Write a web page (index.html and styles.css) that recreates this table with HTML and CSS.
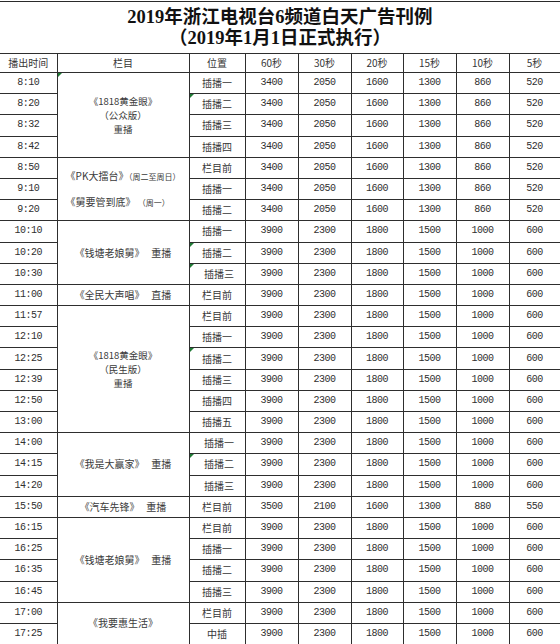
FILE: index.html
```html
<!DOCTYPE html>
<html lang="zh-CN">
<head>
<meta charset="utf-8">
<title>2019年浙江电视台6频道白天广告刊例</title>
<link rel="stylesheet" href="styles.css">
</head>
<body>
<div class="sheet">
  <div class="title">
    <div>2019年浙江电视台6频道白天广告刊例</div>
    <div>（2019年1月1日正式执行）</div>
  </div>
  <table class="grid">
    <colgroup>
      <col class="c-time"><col class="c-prog"><col class="c-pos">
      <col class="c-60"><col class="c-30"><col class="c-20"><col class="c-15"><col class="c-10"><col class="c-5">
    </colgroup>
    <thead>
      <tr class="head">
        <th class="first">播出时间</th><th>栏目</th><th>位置</th>
        <th>60秒</th><th>30秒</th><th>20秒</th><th>15秒</th><th>10秒</th><th>5秒</th>
      </tr>
    </thead>
    <tbody>
      <tr>
        <td class="first n">8:10</td>
        <td class="prog tri" rowspan="4"><p class="lines">《1818黄金眼》<br>（公众版）<br>重播</p></td>
        <td>插播一</td><td class="n">3400</td><td class="n">2050</td><td class="n">1600</td><td class="n">1300</td><td class="n">860</td><td class="n">520</td>
      </tr>
      <tr>
        <td class="first n">8:20</td>
        <td class="tri">插播二</td><td class="n">3400</td><td class="n">2050</td><td class="n">1600</td><td class="n">1300</td><td class="n">860</td><td class="n">520</td>
      </tr>
      <tr>
        <td class="first n">8:32</td>
        <td>插播三</td><td class="n">3400</td><td class="n">2050</td><td class="n">1600</td><td class="n">1300</td><td class="n">860</td><td class="n">520</td>
      </tr>
      <tr>
        <td class="first n">8:42</td>
        <td>插播四</td><td class="n">3400</td><td class="n">2050</td><td class="n">1600</td><td class="n">1300</td><td class="n">860</td><td class="n">520</td>
      </tr>
      <tr>
        <td class="first n">8:50</td>
        <td class="prog" rowspan="3"><div class="pk"><div>《PK大擂台》<span class="small">（周二至周日）</span></div><div class="pk2">《舅要管到底》 <span class="small">（周一）</span></div></div></td>
        <td>栏目前</td><td class="n">3400</td><td class="n">2050</td><td class="n">1600</td><td class="n">1300</td><td class="n">860</td><td class="n">520</td>
      </tr>
      <tr>
        <td class="first n">9:10</td>
        <td>插播一</td><td class="n">3400</td><td class="n">2050</td><td class="n">1600</td><td class="n">1300</td><td class="n">860</td><td class="n">520</td>
      </tr>
      <tr>
        <td class="first n">9:20</td>
        <td>插播二</td><td class="n">3400</td><td class="n">2050</td><td class="n">1600</td><td class="n">1300</td><td class="n">860</td><td class="n">520</td>
      </tr>
      <tr>
        <td class="first n">10:10</td>
        <td class="prog" rowspan="3">《钱塘老娘舅》&nbsp;&nbsp;&nbsp;重播</td>
        <td>插播一</td><td class="n">3900</td><td class="n">2300</td><td class="n">1800</td><td class="n">1500</td><td class="n">1000</td><td class="n">600</td>
      </tr>
      <tr>
        <td class="first n">10:20</td>
        <td class="tri">插播二</td><td class="n">3900</td><td class="n">2300</td><td class="n">1800</td><td class="n">1500</td><td class="n">1000</td><td class="n">600</td>
      </tr>
      <tr>
        <td class="first n">10:30</td>
        <td class="tri shift">插播三</td><td class="n">3900</td><td class="n">2300</td><td class="n">1800</td><td class="n">1500</td><td class="n">1000</td><td class="n">600</td>
      </tr>
      <tr>
        <td class="first n">11:00</td>
        <td class="prog">《全民大声唱》&nbsp;&nbsp;&nbsp;直播</td>
        <td>栏目前</td><td class="n">3900</td><td class="n">2300</td><td class="n">1800</td><td class="n">1500</td><td class="n">1000</td><td class="n">600</td>
      </tr>
      <tr>
        <td class="first n">11:57</td>
        <td class="prog" rowspan="6"><p class="lines">《1818黄金眼》<br>（民生版）<br>重播</p></td>
        <td>栏目前</td><td class="n">3900</td><td class="n">2300</td><td class="n">1800</td><td class="n">1500</td><td class="n">1000</td><td class="n">600</td>
      </tr>
      <tr>
        <td class="first n">12:10</td>
        <td>插播一</td><td class="n">3900</td><td class="n">2300</td><td class="n">1800</td><td class="n">1500</td><td class="n">1000</td><td class="n">600</td>
      </tr>
      <tr>
        <td class="first n">12:25</td>
        <td class="tri">插播二</td><td class="n">3900</td><td class="n">2300</td><td class="n">1800</td><td class="n">1500</td><td class="n">1000</td><td class="n">600</td>
      </tr>
      <tr>
        <td class="first n">12:39</td>
        <td>插播三</td><td class="n">3900</td><td class="n">2300</td><td class="n">1800</td><td class="n">1500</td><td class="n">1000</td><td class="n">600</td>
      </tr>
      <tr>
        <td class="first n">12:50</td>
        <td>插播四</td><td class="n">3900</td><td class="n">2300</td><td class="n">1800</td><td class="n">1500</td><td class="n">1000</td><td class="n">600</td>
      </tr>
      <tr>
        <td class="first n">13:00</td>
        <td>插播五</td><td class="n">3900</td><td class="n">2300</td><td class="n">1800</td><td class="n">1500</td><td class="n">1000</td><td class="n">600</td>
      </tr>
      <tr>
        <td class="first n">14:00</td>
        <td class="prog" rowspan="3">《我是大赢家》&nbsp;&nbsp;&nbsp;重播</td>
        <td class="shift">插播一</td><td class="n">3900</td><td class="n">2300</td><td class="n">1800</td><td class="n">1500</td><td class="n">1000</td><td class="n">600</td>
      </tr>
      <tr>
        <td class="first n">14:15</td>
        <td class="tri shift">插播二</td><td class="n">3900</td><td class="n">2300</td><td class="n">1800</td><td class="n">1500</td><td class="n">1000</td><td class="n">600</td>
      </tr>
      <tr>
        <td class="first n">14:20</td>
        <td class="shift">插播三</td><td class="n">3900</td><td class="n">2300</td><td class="n">1800</td><td class="n">1500</td><td class="n">1000</td><td class="n">600</td>
      </tr>
      <tr>
        <td class="first n">15:50</td>
        <td class="prog">《汽车先锋》&nbsp;&nbsp;&nbsp;重播</td>
        <td>栏目前</td><td class="n">3500</td><td class="n">2100</td><td class="n">1600</td><td class="n">1300</td><td class="n">880</td><td class="n">550</td>
      </tr>
      <tr>
        <td class="first n">16:15</td>
        <td class="prog" rowspan="4">《钱塘老娘舅》&nbsp;&nbsp;&nbsp;重播</td>
        <td>栏目前</td><td class="n">3900</td><td class="n">2300</td><td class="n">1800</td><td class="n">1500</td><td class="n">1000</td><td class="n">600</td>
      </tr>
      <tr>
        <td class="first n">16:25</td>
        <td>插播一</td><td class="n">3900</td><td class="n">2300</td><td class="n">1800</td><td class="n">1500</td><td class="n">1000</td><td class="n">600</td>
      </tr>
      <tr>
        <td class="first n">16:35</td>
        <td>插播二</td><td class="n">3900</td><td class="n">2300</td><td class="n">1800</td><td class="n">1500</td><td class="n">1000</td><td class="n">600</td>
      </tr>
      <tr>
        <td class="first n">16:45</td>
        <td>插播三</td><td class="n">3900</td><td class="n">2300</td><td class="n">1800</td><td class="n">1500</td><td class="n">1000</td><td class="n">600</td>
      </tr>
      <tr>
        <td class="first n">17:00</td>
        <td class="prog" rowspan="2">《我要惠生活》</td>
        <td>栏目前</td><td class="n">3900</td><td class="n">2300</td><td class="n">1800</td><td class="n">1500</td><td class="n">1000</td><td class="n">600</td>
      </tr>
      <tr class="last">
        <td class="first n corner">17:25</td>
        <td>中插</td><td class="n">3900</td><td class="n">2300</td><td class="n">1800</td><td class="n">1500</td><td class="n">1000</td><td class="n">600</td>
      </tr>
    </tbody>
  </table>
</div>
</body>
</html>
```
FILE: styles.css
```css
html, body {
  margin: 0;
  padding: 0;
  background: #ffffff;
}

body {
  font-family: "Noto Sans CJK SC", sans-serif;
  color: #363636;
}

.sheet {
  width: 560px;
  padding-top: 1px;
}

.title {
  border-top: 1px solid #2a2a2a;
  height: 52px;
  padding-top: 5px;
  box-sizing: border-box;
  text-align: center;
  font-family: "Liberation Serif", "Noto Sans CJK SC", serif;
  font-weight: 700;
  font-size: 18.5px;
  line-height: 21px;
  color: #111111;
}

.grid {
  border-collapse: collapse;
  table-layout: fixed;
  width: 560px;
}

.c-time { width: 57px; }
.c-prog { width: 132px; }
.c-pos { width: 56px; }
.c-60 { width: 53px; }
.c-30 { width: 53px; }
.c-20 { width: 52px; }
.c-15 { width: 53px; }
.c-10 { width: 53px; }
.c-5 { width: 51px; }

.grid th,
.grid td {
  border: 1px solid #2e2e2e;
  padding: 0;
  text-align: center;
  vertical-align: middle;
  font-size: 10px;
  font-weight: 400;
  line-height: 12px;
  white-space: nowrap;
}

.grid .first {
  border-left: none;
}

.head {
  height: 19px;
}

.grid tbody tr {
  height: 21.2px;
}

.grid .n {
  font-family: "Liberation Mono", monospace;
  font-size: 10px;
  letter-spacing: -0.55px;
  color: #303030;
}

.prog {
  color: #3a3a3a;
}

.lines {
  margin: 0;
  font-size: 9.5px;
  line-height: 14px;
}

.small {
  font-size: 8px;
}

.pk {
  display: inline-block;
  text-align: left;
}

.pk2 {
  margin-top: 13px;
}

.shift {
  padding-left: 4px !important;
}

.tri {
  position: relative;
}

.tri::before {
  content: "";
  position: absolute;
  left: 0;
  top: 0;
  width: 0;
  height: 0;
  border-top: 4px solid #1f7a35;
  border-right: 4px solid transparent;
}

.last td {
  border-bottom: 2px solid #1e1e1e;
}

.corner {
  position: relative;
}

.corner::after {
  content: "";
  position: absolute;
  left: 0;
  bottom: -4px;
  width: 3px;
  height: 2px;
  background: #1f7a35;
}
```
